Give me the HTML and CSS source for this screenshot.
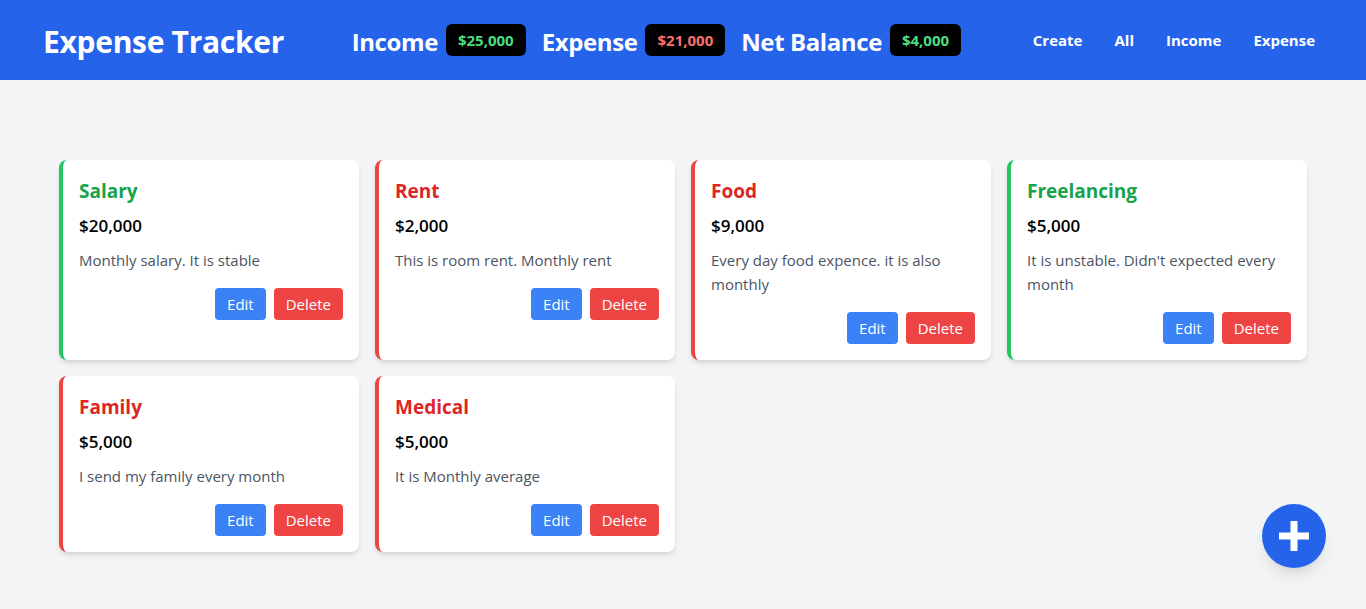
FILE: index.html
```html
<!DOCTYPE html>
<html lang="en">
<head>
<meta charset="utf-8">
<title>Expense Tracker</title>
<link rel="stylesheet" href="styles.css">
</head>
<body>
<header class="topbar">
  <div class="topbar-inner">
    <h1 class="brand">Expense Tracker</h1>
    <div class="stats">
      <div class="stat"><span class="stat-label">Income</span><span class="badge badge-green">$25,000</span></div>
      <div class="stat"><span class="stat-label">Expense</span><span class="badge badge-red">$21,000</span></div>
      <div class="stat"><span class="stat-label">Net Balance</span><span class="badge badge-green">$4,000</span></div>
    </div>
    <nav class="nav">
      <a class="nav-link" href="#">Create</a>
      <a class="nav-link" href="#">All</a>
      <a class="nav-link" href="#">Income</a>
      <a class="nav-link" href="#">Expense</a>
    </nav>
  </div>
</header>

<main class="content">
  <div class="grid">
    <div class="card card-income">
      <h2 class="card-title title-income">Salary</h2>
      <p class="card-amount">$20,000</p>
      <p class="card-desc">Monthly salary. It is stable</p>
      <div class="card-actions"><button class="btn btn-edit">Edit</button><button class="btn btn-delete">Delete</button></div>
    </div>
    <div class="card card-expense">
      <h2 class="card-title title-expense">Rent</h2>
      <p class="card-amount">$2,000</p>
      <p class="card-desc">This is room rent. Monthly rent</p>
      <div class="card-actions"><button class="btn btn-edit">Edit</button><button class="btn btn-delete">Delete</button></div>
    </div>
    <div class="card card-expense">
      <h2 class="card-title title-expense">Food</h2>
      <p class="card-amount">$9,000</p>
      <p class="card-desc">Every day food expence. it is also monthly</p>
      <div class="card-actions"><button class="btn btn-edit">Edit</button><button class="btn btn-delete">Delete</button></div>
    </div>
    <div class="card card-income">
      <h2 class="card-title title-income">Freelancing</h2>
      <p class="card-amount">$5,000</p>
      <p class="card-desc">It is unstable. Didn't expected every month</p>
      <div class="card-actions"><button class="btn btn-edit">Edit</button><button class="btn btn-delete">Delete</button></div>
    </div>
    <div class="card card-expense">
      <h2 class="card-title title-expense">Family</h2>
      <p class="card-amount">$5,000</p>
      <p class="card-desc">I send my family every month</p>
      <div class="card-actions"><button class="btn btn-edit">Edit</button><button class="btn btn-delete">Delete</button></div>
    </div>
    <div class="card card-expense">
      <h2 class="card-title title-expense">Medical</h2>
      <p class="card-amount">$5,000</p>
      <p class="card-desc">It is Monthly average</p>
      <div class="card-actions"><button class="btn btn-edit">Edit</button><button class="btn btn-delete">Delete</button></div>
    </div>
  </div>
</main>

<button class="fab" aria-label="Add">
  <svg width="32" height="32" viewBox="0 0 32 32"><path d="M12.5 1h7v11.5H31v7H19.5V31h-7V19.5H1v-7h11.5z" fill="#fff"/></svg>
</button>
</body>
</html>
```

FILE: styles.css
```css
* { box-sizing: border-box; }
html, body { margin: 0; padding: 0; }
body {
  font-family: "Open Sans", "Noto Sans", "Liberation Sans", sans-serif;
  background: #f3f4f6;
  color: #111827;
  min-height: 609px;
}
.topbar {
  background: #2563eb;
  color: #fff;
}
.topbar-inner {
  width: 1280px;
  margin: 0 auto;
  height: 80px;
  display: flex;
  align-items: center;
  justify-content: space-between;
}
.brand {
  margin: 0;
  padding-top: 3px;
  font-size: 30px;
  line-height: 36px;
  font-weight: 700;
  letter-spacing: -0.3px;
}
.stats {
  display: flex;
  align-items: center;
  gap: 16px;
  padding-left: 4px;
}
.stat {
  display: flex;
  align-items: center;
  gap: 8px;
}
.stat-label {
  font-size: 24px;
  line-height: 32px;
  font-weight: 700;
  letter-spacing: -0.4px;
  padding-top: 3px;
}
.badge {
  background: #000;
  border-radius: 6px;
  padding: 4px 12px;
  font-size: 15px;
  line-height: 24px;
  font-weight: 700;
}
.badge-green { color: #4ade80; }
.badge-red { color: #f87171; }
.nav {
  display: flex;
  gap: 16px;
}
.nav-link {
  color: #fff;
  text-decoration: none;
  font-weight: 700;
  font-size: 15px;
  line-height: 24px;
  padding: 0 8px;
}
.content {
  width: 1280px;
  margin: 0 auto;
  padding: 80px 16px 0;
}
.grid {
  display: grid;
  grid-template-columns: repeat(4, 1fr);
  gap: 16px;
}
.card {
  background: #fff;
  border-radius: 8px;
  border-left: 4px solid;
  padding: 16px;
  box-shadow: 0 4px 6px -1px rgba(0,0,0,0.1), 0 2px 4px -2px rgba(0,0,0,0.1);
}
.card-income { border-left-color: #22c55e; }
.card-expense { border-left-color: #ef4444; }
.card-title {
  margin: 0 0 8px;
  font-size: 19px;
  line-height: 28px;
  font-weight: 700;
  padding-top: 1px;
  height: 28px;
}
.title-income { color: #16a34a; }
.title-expense { color: #dc2626; }
.card-amount {
  margin: 0 0 8px;
  font-size: 17px;
  line-height: 28px;
  font-weight: 600;
  color: #000;
}
.card-desc {
  margin: 0;
  font-size: 15px;
  line-height: 24px;
  color: #4b5563;
}
.card-actions {
  margin-top: 16px;
  display: flex;
  justify-content: flex-end;
  gap: 8px;
}
.btn {
  font-family: inherit;
  border: 0;
  border-radius: 4px;
  color: #fff;
  font-size: 15px;
  line-height: 24px;
  padding: 4px 12px;
  cursor: pointer;
}
.btn-edit { background: #3b82f6; }
.btn-delete { background: #ef4444; }
.fab {
  position: fixed;
  right: 40px;
  bottom: 41px;
  width: 64px;
  height: 64px;
  border-radius: 50%;
  border: 0;
  background: #2563eb;
  display: flex;
  align-items: center;
  justify-content: center;
  box-shadow: 0 10px 15px -3px rgba(0,0,0,0.1), 0 4px 6px -4px rgba(0,0,0,0.1);
  padding: 0;
}
```
